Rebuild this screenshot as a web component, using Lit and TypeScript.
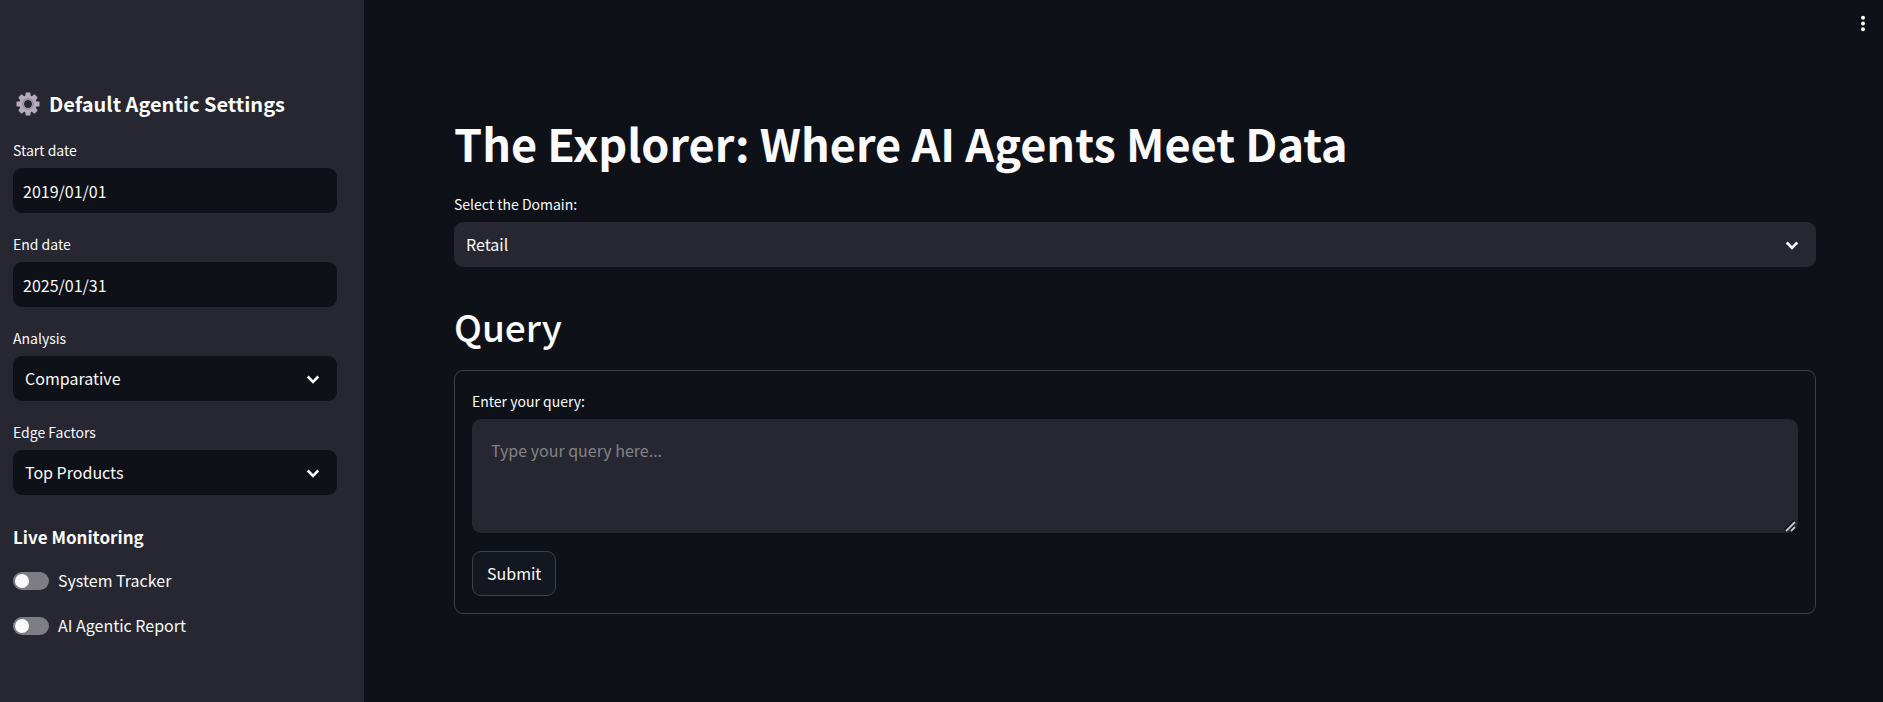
import { LitElement, html, css, svg } from "lit";
import { customElement, property } from "lit/decorators.js";

const chevron = html`<svg class="chevron" viewBox="0 0 24 24" aria-hidden="true">
  <path d="M6.7 9.5 L12 14.8 L17.3 9.5" fill="none" stroke="currentColor" stroke-width="2.6" />
</svg>`;

const controls = css`
  * {
    box-sizing: border-box;
  }
  input,
  select,
  textarea,
  button {
    margin: 0;
    font: inherit;
    color: inherit;
    outline-color: #ff4b4b;
  }
  label {
    font-size: 14px;
    line-height: 24px;
  }
  .field {
    display: flex;
    flex-direction: column;
    gap: 6px;
  }
  .box {
    height: 45px;
    width: 100%;
    border: 0;
    border-radius: 9px;
    background: var(--field-bg);
  }
  .text {
    padding: 0 10px;
  }
  .select-wrap {
    display: grid;
    align-items: center;
  }
  .select-wrap > * {
    grid-area: 1 / 1;
  }
  select {
    appearance: none;
    padding: 0 48px 0 12px;
  }
  .chevron {
    width: 24px;
    height: 24px;
    margin-right: 12px;
    justify-self: end;
    pointer-events: none;
  }
`;

@customElement("date-field")
export class DateField extends LitElement {
  static styles = controls;
  @property() label = "";
  @property() value = "";
  render() {
    return html`<div class="field">
      <label for="f">${this.label}</label>
      <input id="f" class="box text" type="text" .value=${this.value} />
    </div>`;
  }
}

@customElement("select-field")
export class SelectField extends LitElement {
  static styles = controls;
  @property() label = "";
  @property({ attribute: false }) options: string[] = [];
  render() {
    return html`<div class="field">
      <label for="f">${this.label}</label>
      <div class="select-wrap">
        <select id="f" class="box">
          ${this.options.map((o) => html`<option>${o}</option>`)}
        </select>
        ${chevron}
      </div>
    </div>`;
  }
}

@customElement("toggle-field")
export class ToggleField extends LitElement {
  static styles = css`
    label {
      display: flex;
      align-items: center;
      gap: 9px;
      font-size: 16px;
      line-height: 27px;
    }
    input {
      appearance: none;
      display: flex;
      align-items: center;
      box-sizing: border-box;
      width: 36px;
      height: 18px;
      margin: 0;
      padding: 0 2px;
      border-radius: 9px;
      background: #7d7d83;
    }
    input::before {
      content: "";
      width: 14px;
      height: 14px;
      border-radius: 50%;
      background: #fafafa;
    }
    input:checked {
      justify-content: flex-end;
      background: #ff4b4b;
    }
  `;
  @property() label = "";
  render() {
    return html`<label><input type="checkbox" role="switch" />${this.label}</label>`;
  }
}

@customElement("app-root")
export class AppRoot extends LitElement {
  static styles = [
    controls,
    css`
      :host {
        display: flex;
        min-height: 100vh;
        background: #0e1117;
        color: #fafafa;
        color-scheme: dark;
        font-family: "Source Sans Pro", "Noto Sans CJK SC", sans-serif;
        font-size: 16px;
        line-height: 27px;
      }
      h1,
      h2,
      h3,
      h4 {
        margin: 0;
      }
      .sidebar {
        --field-bg: #0e1117;
        flex: 0 0 364px;
        padding: 90px 27px 40px 13px;
        background: #262730;
      }
      .settings-title {
        display: flex;
        align-items: center;
        gap: 9px;
        padding-left: 3px;
        font-size: 20px;
        line-height: 28px;
        font-weight: 600;
      }
      .gear {
        width: 24px;
        height: 24px;
      }
      .fields {
        display: flex;
        flex-direction: column;
        gap: 19px;
        margin-top: 20px;
      }
      .monitor-title {
        margin-top: 28px;
        font-size: 17px;
        line-height: 27px;
        font-weight: 600;
      }
      .toggles {
        display: flex;
        flex-direction: column;
        gap: 18px;
        margin-top: 17px;
      }
      .main {
        --field-bg: #262730;
        flex: 1;
        min-width: 0;
      }
      .toolbar {
        display: flex;
        justify-content: flex-end;
        padding: 12px 8px 0;
      }
      .menu {
        display: flex;
        padding: 0;
        border: 0;
        background: none;
      }
      .menu svg {
        width: 24px;
        height: 24px;
      }
      .content {
        padding: 77px 67px 40px 90px;
      }
      h1 {
        font-size: 45px;
        line-height: 60px;
        font-weight: 700;
      }
      .domain {
        display: block;
        margin-top: 19px;
      }
      h2 {
        margin-top: 32px;
        font-size: 37px;
        line-height: 54px;
        font-weight: 500;
      }
      form {
        display: flex;
        flex-direction: column;
        align-items: flex-start;
        gap: 18px;
        margin-top: 17px;
        padding: 18px 17px 17px;
        border: 1px solid #3d4045;
        border-radius: 9px;
      }
      .query {
        width: 100%;
      }
      textarea {
        display: block;
        width: 100%;
        height: 114px;
        padding: 18px 19px;
        border: 0;
        border-radius: 9px;
        background: #262730;
        resize: vertical;
      }
      textarea::placeholder {
        color: #828387;
      }
      textarea::-webkit-resizer {
        background: url("data:image/svg+xml,%3Csvg xmlns='http://www.w3.org/2000/svg' width='15' height='15'%3E%3Cpath d='M2.5 12.5L12 3M8.5 12.5L12 9' stroke='%230b0b0d' stroke-width='3.6'/%3E%3Cpath d='M3 13L12 4M8 13L12 9' stroke='%23c8c8c8' stroke-width='1.8'/%3E%3C/svg%3E")
          no-repeat right bottom;
      }
      .submit {
        height: 45px;
        padding: 0 14px;
        border: 1px solid #3d4045;
        border-radius: 9px;
        background: #131720;
      }
    `,
  ];

  private gear() {
    return html`<svg class="gear" viewBox="-12 -12 24 24" aria-hidden="true">
      ${[0, 45, 90, 135, 180, 225, 270, 315].map(
        (a) => svg`<path d="M-3 -7 L-2.3 -11.5 H2.3 L3 -7Z" fill="#b4acbc" transform="rotate(${a})" />`
      )}
      <circle r="6.3" fill="none" stroke="#b4acbc" stroke-width="4.4" />
      <circle r="5" fill="none" stroke="#998ea4" stroke-width="2" />
    </svg>`;
  }

  render() {
    return html`
      <aside class="sidebar">
        <h3 class="settings-title">${this.gear()}<span>Default Agentic Settings</span></h3>
        <div class="fields">
          <date-field label="Start date" value="2019/01/01"></date-field>
          <date-field label="End date" value="2025/01/31"></date-field>
          <select-field label="Analysis" .options=${["Comparative"]}></select-field>
          <select-field label="Edge Factors" .options=${["Top Products"]}></select-field>
        </div>
        <h4 class="monitor-title">Live Monitoring</h4>
        <div class="toggles">
          <toggle-field label="System Tracker"></toggle-field>
          <toggle-field label="AI Agentic Report"></toggle-field>
        </div>
      </aside>
      <main class="main">
        <div class="toolbar">
          <button class="menu" type="button" aria-label="Menu">
            <svg viewBox="0 0 24 24" fill="currentColor" aria-hidden="true">
              <circle cx="12" cy="5.7" r="2" />
              <circle cx="12" cy="11.5" r="2" />
              <circle cx="12" cy="17.3" r="2" />
            </svg>
          </button>
        </div>
        <div class="content">
          <h1>The Explorer: Where AI Agents Meet Data</h1>
          <select-field class="domain" label="Select the Domain:" .options=${["Retail"]}></select-field>
          <h2>Query</h2>
          <form @submit=${(e: Event) => e.preventDefault()}>
            <div class="field query">
              <label for="query">Enter your query:</label>
              <textarea id="query" placeholder="Type your query here..."></textarea>
            </div>
            <button class="submit" type="submit">Submit</button>
          </form>
        </div>
      </main>
    `;
  }
}
